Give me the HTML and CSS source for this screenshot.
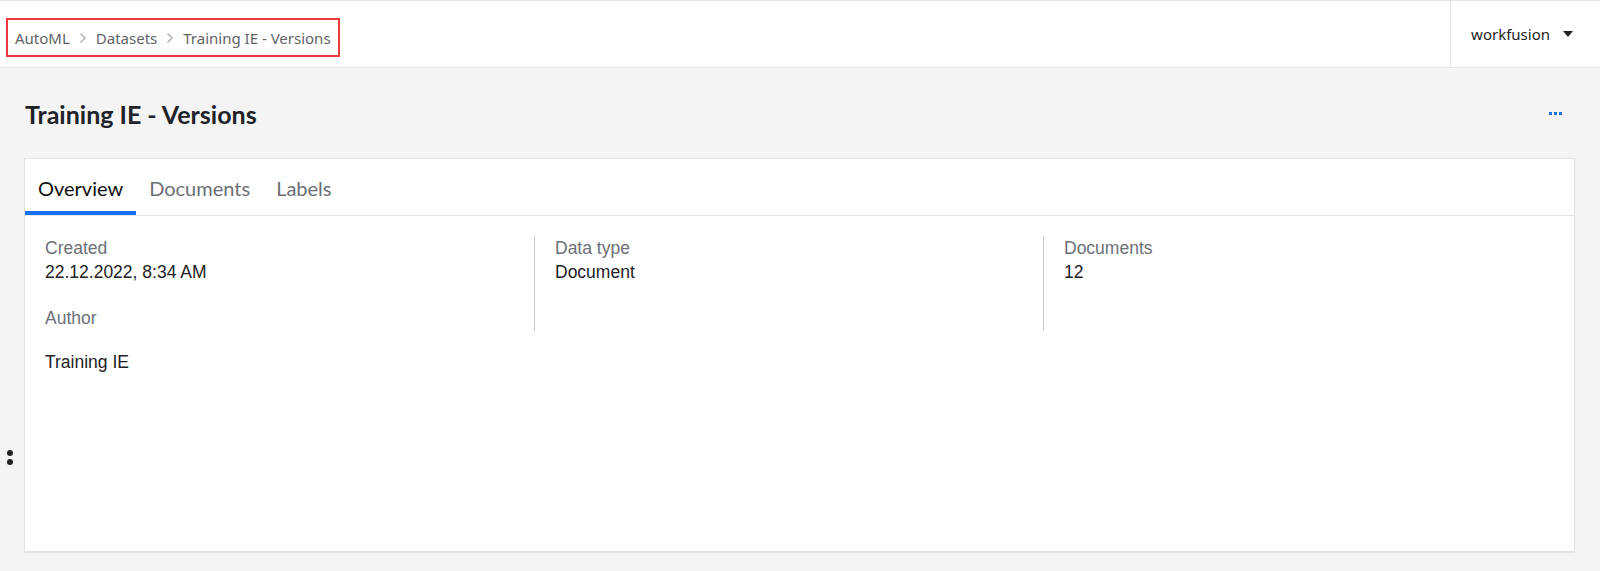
FILE: index.html
```html
<!DOCTYPE html>
<html lang="en">
<head>
    <meta charset="UTF-8">
    <meta name="viewport" content="width=device-width, initial-scale=1.0">
    <title>Training IE - Versions</title>
    <link rel="stylesheet" href="styles.css">
</head>
<body>

    <!-- Top Bar -->
    <div class="top-bar">
        <div class="breadcrumbs">
            <a href="#">AutoML</a>
            <svg class="crumb-sep" width="8" height="12" viewBox="0 0 8 12"><polyline points="1.5,1.5 6,6 1.5,10.5" fill="none" stroke="#b4b4b4" stroke-width="1.6"/></svg>
            <a href="#">Datasets</a>
            <svg class="crumb-sep" width="8" height="12" viewBox="0 0 8 12"><polyline points="1.5,1.5 6,6 1.5,10.5" fill="none" stroke="#b4b4b4" stroke-width="1.6"/></svg>
            <span>Training IE - Versions</span>
        </div>
        <div class="user-menu">
            <span>workfusion</span>
            <span class="caret"></span>
        </div>
    </div>

    <!-- Side handle -->
    <div class="side-handle">
        <span></span>
        <span></span>
    </div>

    <!-- Main Content -->
    <div class="main-content">
        <div class="page-head">
            <h1>Training IE - Versions</h1>
            <button class="more-btn" title="More">
                <svg width="13" height="3" viewBox="0 0 13 3"><rect x="0" y="0" width="3" height="3"/><rect x="5" y="0" width="3" height="3"/><rect x="10" y="0" width="3" height="3"/></svg>
            </button>
        </div>

        <div class="card">
            <div class="tabs">
                <div class="tab active">Overview</div>
                <div class="tab">Documents</div>
                <div class="tab">Labels</div>
            </div>

            <div class="overview">
                <div class="field-col">
                    <div class="label">Created</div>
                    <div class="value">22.12.2022, 8:34 AM</div>
                    <div class="label spaced">Author</div>
                    <div class="value author">Training IE</div>
                </div>
                <div class="field-col divided">
                    <div class="label">Data type</div>
                    <div class="value">Document</div>
                </div>
                <div class="field-col divided">
                    <div class="label">Documents</div>
                    <div class="value">12</div>
                </div>
            </div>
        </div>
    </div>

</body>
</html>
```

FILE: styles.css
```css
/* Global Reset */
* {
    margin: 0;
    padding: 0;
    box-sizing: border-box;
}

body {
    background: #f4f4f4;
    color: #1e2125;
    font-family: "Liberation Sans", Arial, sans-serif;
    min-height: 100vh;
    overflow: hidden;
}

/* Top Bar */
.top-bar {
    height: 68px;
    background: #fff;
    border-top: 1px solid #e4e4e4;
    border-bottom: 1px solid #e4e4e4;
    display: flex;
    justify-content: space-between;
}

.breadcrumbs {
    align-self: flex-start;
    margin: 17px 0 0 6px;
    height: 39px;
    border: 2px solid #f0393c;
    padding: 0 7px 0 7px;
    display: flex;
    align-items: center;
    gap: 9px;
    white-space: nowrap;
    font-family: "Noto Sans", "Open Sans", sans-serif;
    font-size: 15px;
    color: #5f6368;
}

.breadcrumbs a {
    color: #5f6368;
    text-decoration: none;
}

.crumb-sep {
    display: block;
}

/* User Menu */
.user-menu {
    border-left: 1px solid #e4e4e4;
    padding: 0 27px 0 20px;
    display: flex;
    align-items: center;
    gap: 13px;
    font-family: "Noto Sans", "Open Sans", sans-serif;
    font-size: 15px;
    color: #1d1d1d;
}

.caret {
    width: 0;
    height: 0;
    border-left: 5.5px solid transparent;
    border-right: 5.5px solid transparent;
    border-top: 6px solid #222;
}

/* Side handle */
.side-handle {
    position: absolute;
    left: 7px;
    top: 450px;
    display: flex;
    flex-direction: column;
    gap: 3px;
}

.side-handle span {
    width: 6px;
    height: 6px;
    border-radius: 50%;
    background: #232323;
}

/* Main Content */
.main-content {
    padding: 0 25px 0 24px;
}

.page-head {
    height: 90px;
    display: flex;
    align-items: center;
    justify-content: space-between;
}

.page-head h1 {
    font-family: Lato, "Open Sans", sans-serif;
    font-weight: 700;
    font-size: 25px;
    color: #1f2329;
    padding-left: 1px;
    margin-top: 2px;
}

.more-btn {
    background: none;
    border: none;
    cursor: pointer;
    fill: #1a73e8;
    margin-right: 13px;
    display: flex;
}

/* Card */
.card {
    height: 394px;
    background: #fff;
    border: 1px solid #e2e2e2;
    box-shadow: 0 1px 1px rgba(0, 0, 0, 0.06);
}

.tabs {
    height: 57px;
    display: flex;
    border-bottom: 1px solid #e4e4e4;
}

.tab {
    padding: 5px 13px 0;
    display: flex;
    align-items: center;
    font-family: Lato, "Open Sans", sans-serif;
    font-size: 20px;
    color: #6b6f76;
    border-bottom: 4px solid transparent;
    border-radius: 3px 3px 0 0;
    cursor: pointer;
}

.tab.active {
    color: #111;
    border-bottom-color: #1570ef;
}

/* Overview fields */
.overview {
    display: grid;
    grid-template-columns: 489px 509px 1fr;
    align-items: start;
    padding: 20px 20px 0;
}

.field-col.divided {
    height: 95px;
    border-left: 1px solid #c6c6c6;
    padding-left: 20px;
}

.label {
    font-size: 17.5px;
    line-height: 24px;
    color: #6c7079;
}

.label.spaced {
    margin-top: 22px;
}

.value {
    font-size: 17.5px;
    line-height: 24px;
    color: #1e2125;
}

.value.author {
    margin-top: 20px;
}
```
